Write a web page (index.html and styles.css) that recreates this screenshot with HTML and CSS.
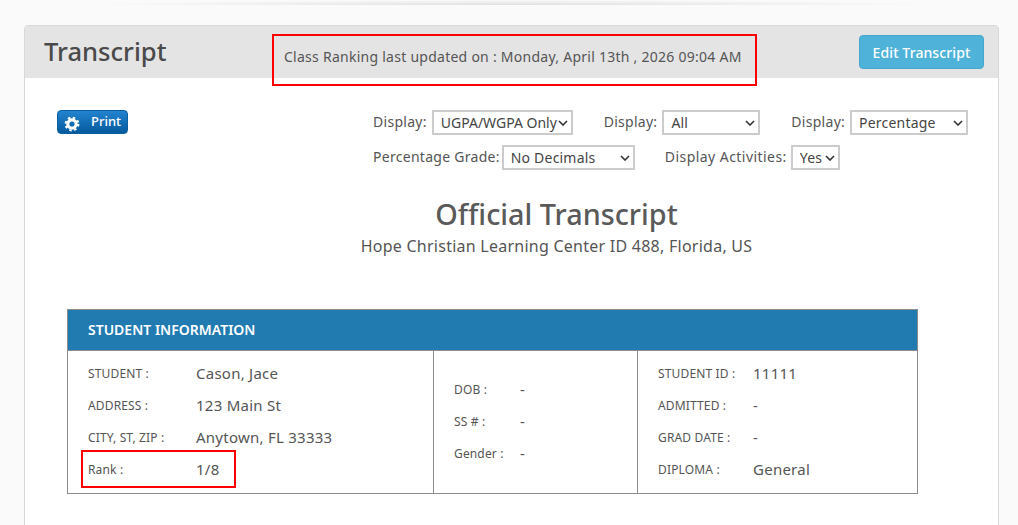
FILE: index.html
```html
<!DOCTYPE html>
<html lang="en">
<head>
    <meta charset="UTF-8">
    <meta name="viewport" content="width=device-width, initial-scale=1.0">
    <title>Transcript</title>
    <link rel="stylesheet" href="styles.css">
</head>
<body>
    <div class="top-shadow"></div>

    <div class="panel">
        <div class="panel-header">
            <h2 class="panel-title">Transcript</h2>
            <p class="ranking-note">Class Ranking last updated on : Monday, April 13th , 2026 09:04 AM</p>
            <button class="edit-btn">Edit Transcript</button>
            <div class="callout callout-ranking"></div>
        </div>

        <div class="panel-body">
            <div class="toolbar">
                <button class="print-btn">
                    <svg class="gear" viewBox="0 0 16 16" width="16" height="16">
                        <circle cx="8" cy="8" r="4.2" fill="none" stroke="#fff" stroke-width="3.2"/>
                        <circle cx="8" cy="8" r="6.4" fill="none" stroke="#fff" stroke-width="2" stroke-dasharray="2.5 2.53"/>
                    </svg>
                    <span>Print</span>
                </button>

                <div class="filters">
                    <div class="filter-row">
                        <label>Display:</label>
                        <select class="select-type">
                            <option>UGPA/WGPA Only</option>
                        </select>
                        <label class="gap-label">Display:</label>
                        <select class="select-all">
                            <option>All</option>
                        </select>
                        <label class="gap-label">Display:</label>
                        <select class="select-format">
                            <option>Percentage</option>
                        </select>
                    </div>
                    <div class="filter-row">
                        <label class="label-grade">Percentage Grade:</label>
                        <select class="select-decimals">
                            <option>No Decimals</option>
                        </select>
                        <label class="gap-label label-activities">Display Activities:</label>
                        <select class="select-yes">
                            <option>Yes</option>
                        </select>
                    </div>
                </div>
            </div>

            <div class="doc-heading">
                <h1>Official Transcript</h1>
                <p>Hope Christian Learning Center ID 488, Florida, US</p>
            </div>

            <div class="student-info">
                <div class="info-title">STUDENT INFORMATION</div>
                <div class="info-grid">
                    <div class="info-col col-student">
                        <div class="info-row"><span class="info-label">STUDENT :</span><span class="info-value">Cason, Jace</span></div>
                        <div class="info-row"><span class="info-label">ADDRESS :</span><span class="info-value">123 Main St</span></div>
                        <div class="info-row"><span class="info-label">CITY, ST, ZIP :</span><span class="info-value">Anytown, FL 33333</span></div>
                        <div class="info-row"><span class="info-label">Rank :</span><span class="info-value">1/8</span></div>
                        <div class="callout callout-rank"></div>
                    </div>
                    <div class="info-col col-personal">
                        <div class="info-row"><span class="info-label">DOB :</span><span class="info-value">-</span></div>
                        <div class="info-row"><span class="info-label">SS # :</span><span class="info-value">-</span></div>
                        <div class="info-row"><span class="info-label">Gender :</span><span class="info-value">-</span></div>
                    </div>
                    <div class="info-col col-school">
                        <div class="info-row"><span class="info-label">STUDENT ID :</span><span class="info-value">11111</span></div>
                        <div class="info-row"><span class="info-label">ADMITTED :</span><span class="info-value">-</span></div>
                        <div class="info-row"><span class="info-label">GRAD DATE :</span><span class="info-value">-</span></div>
                        <div class="info-row"><span class="info-label">DIPLOMA :</span><span class="info-value">General</span></div>
                    </div>
                </div>
            </div>
        </div>
    </div>
</body>
</html>
```

FILE: styles.css
```css
* {
    margin: 0;
    padding: 0;
    box-sizing: border-box;
    font-family: 'Noto Sans', sans-serif;
}

html, body {
    height: 525px;
    overflow: hidden;
}

body {
    background: #fafafa;
    color: #555;
    padding: 0 19px 0 24px;
    position: relative;
}

.top-shadow {
    height: 5px;
    margin: 0 60px 20px 60px;
    background: radial-gradient(ellipse 50% 100% at 50% 100%, #e0e0e0, #fafafa);
}

.panel {
    background: white;
    border: 1px solid #d8d8d8;
    border-radius: 4px 4px 0 0;
    height: 520px;
}

.panel-header {
    height: 52px;
    background: #e4e4e4;
    display: flex;
    align-items: flex-start;
    padding: 9px 14px 0 19px;
    position: relative;
}

.panel-title {
    font-size: 25.6px;
    font-weight: 500;
    line-height: 32px;
    margin-top: 1px;
    color: #4a4a4a;
    width: 240px;
}

.ranking-note {
    font-size: 14px;
    line-height: 20px;
    margin-top: 12px;
    color: #555;
    letter-spacing: 0.26px;
    flex: 1;
}

.edit-btn {
    width: 125px;
    height: 34px;
    background: #4fb3d9;
    border: 1px solid #46a8cf;
    border-radius: 4px;
    color: white;
    font-size: 14px;
    font-weight: 500;
    letter-spacing: 0.1px;
}

.callout {
    position: absolute;
    border: 2px solid #f00;
}

.callout-ranking {
    left: 247px;
    top: 8px;
    width: 485px;
    height: 52px;
}

.panel-body {
    padding: 32px 30px 0 32px;
}

.toolbar {
    display: flex;
    justify-content: space-between;
    align-items: flex-start;
}

.print-btn {
    width: 71px;
    height: 24px;
    background: linear-gradient(#2383cf, #055a9e);
    border: 1px solid #0b5f9f;
    border-radius: 4px;
    color: white;
    font-size: 13px;
    font-weight: 500;
    display: flex;
    align-items: center;
    gap: 11px;
    padding: 0 0 0 6px;
}

.gear {
    margin-top: 3px;
    flex: none;
}

.print-btn span {
    margin-top: -3px;
}

.filters {
    width: 595px;
}

.filter-row {
    display: flex;
    align-items: center;
    height: 25px;
    margin-bottom: 10px;
    font-size: 14px;
}

.filter-row label {
    margin-right: 5px;
    margin-top: -2px;
    letter-spacing: 0.28px;
}

.filter-row .gap-label {
    margin-left: 31px;
}

.filter-row .label-grade {
    margin-right: 2px;
}

.filter-row .label-activities {
    margin-left: 30px;
    margin-right: 4px;
    letter-spacing: 0.45px;
}

.filter-row select {
    appearance: none;
    height: 25px;
    border: 2px solid #ccc;
    background: white url("data:image/svg+xml,%3Csvg xmlns='http://www.w3.org/2000/svg' width='10' height='6'%3E%3Cpath d='M1 1l4 4 4-4' fill='none' stroke='%23333' stroke-width='1.6'/%3E%3C/svg%3E") no-repeat right 3px center;
    border-radius: 0;
    color: #444;
    font-size: 14px;
    letter-spacing: 0.2px;
    padding: 0 0 0 7px;
}

.filter-row .select-type { width: 141px; letter-spacing: 0; }
.select-all { width: 98px; }
.select-format { width: 118px; }
.select-decimals { width: 133px; }
.select-yes { width: 49px; }

.doc-heading {
    text-align: center;
    margin: 14px 0 0 88px;
    height: 115px;
}

.doc-heading h1 {
    font-size: 28.8px;
    font-weight: 500;
    line-height: 40px;
    color: #5a5a5a;
}

.doc-heading p {
    font-size: 16px;
    line-height: 22px;
    margin-top: 1px;
    letter-spacing: 0.25px;
}

.student-info {
    width: 851px;
    margin-left: 10px;
    border: 1px solid #8c8c8c;
}

.info-title {
    height: 41px;
    background: #217bb0;
    border-bottom: 1px solid #8c8c8c;
    color: white;
    font-size: 14px;
    font-weight: 600;
    line-height: 40px;
    padding-left: 20px;
}

.info-grid {
    display: grid;
    grid-template-columns: 365px 205px 1fr;
    height: 142px;
}

.info-col {
    padding: 6px 0 0 20px;
    position: relative;
}

.col-personal {
    border-left: 1px solid #8c8c8c;
    border-right: 1px solid #8c8c8c;
    padding: 22px 0 0 20px;
}

.info-row {
    display: flex;
    align-items: center;
    height: 32px;
}

.info-label {
    font-size: 12px;
    color: #555;
    letter-spacing: 0.15px;
}

.info-value {
    font-size: 15px;
    color: #555;
    letter-spacing: 0.25px;
}

.col-student .info-label { width: 108px; }
.col-personal .info-label { width: 66px; }
.col-school .info-label { width: 95px; }

.callout-rank {
    left: 13px;
    top: 99px;
    width: 155px;
    height: 38px;
}
```
